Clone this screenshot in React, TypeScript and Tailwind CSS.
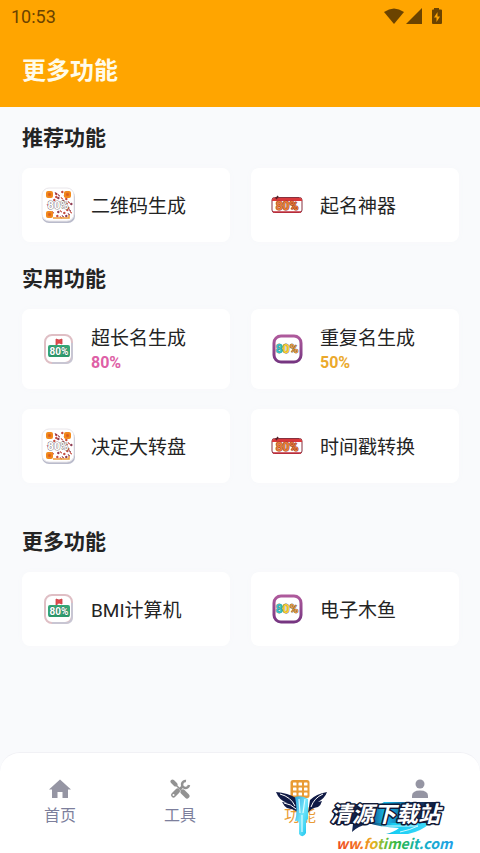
import type { ReactNode } from "react";

type IconName = "qr" | "ticket" | "flag" | "badge";

interface Feature {
  label: string;
  icon: IconName;
  percent?: string;
  percentClass?: string;
}

interface Section {
  title: string;
  className: string;
  items: Feature[];
}

const sections: Section[] = [
  {
    title: "推荐功能",
    className: "mt-[17px]",
    items: [
      { label: "二维码生成", icon: "qr" },
      { label: "起名神器", icon: "ticket" },
    ],
  },
  {
    title: "实用功能",
    className: "mt-[23px]",
    items: [
      { label: "超长名生成", icon: "flag", percent: "80%", percentClass: "text-[#de5fa6]" },
      { label: "重复名生成", icon: "badge", percent: "50%", percentClass: "text-[#eba92c]" },
      { label: "决定大转盘", icon: "qr" },
      { label: "时间戳转换", icon: "ticket" },
    ],
  },
  {
    title: "更多功能",
    className: "mt-[45px]",
    items: [
      { label: "BMI计算机", icon: "flag" },
      { label: "电子木鱼", icon: "badge" },
    ],
  },
];

const iconText = { fontFamily: "Roboto, sans-serif", fontWeight: 700 };

function QrIcon() {
  const specks = [
    [18, 7], [21, 5], [24, 8], [17, 11], [21, 10], [25, 12], [9, 14], [13, 13],
    [28, 14], [30, 17], [7, 17], [8, 21], [29, 22], [26, 23], [12, 24], [17, 25],
    [20, 23], [23, 26], [28, 26], [16, 29], [20, 29], [25, 29], [30, 24], [15, 7],
    [15, 5], [15, 10], [11, 15], [22, 14], [26, 15], [8, 15], [22, 28], [27, 21],
  ];
  return (
    <svg viewBox="0 0 36 36" className="size-9" aria-hidden="true">
      <rect x="2" y="3" width="33" height="33" rx="7" fill="#b9bbcb" />
      <rect x="2" y="1" width="32" height="33" rx="7" fill="#fff" stroke="#e9e6ea" />
      {specks.map(([x, y], i) => (
        <path
          key={i}
          d={i % 2 ? `M${x} ${y}l2 -1l0 2z` : `M${x} ${y}l1 2l1 0`}
          fill={i % 3 ? "#b5322c" : "#7d2940"}
          stroke={i % 3 ? "#c54434" : "#8b3049"}
          strokeWidth="0.7"
        />
      ))}
      {[[6, 4], [24, 4], [6, 24]].map(([x, y]) => (
        <g key={`${x}-${y}`}>
          <rect x={x} y={y} width="7" height="7" rx="2" fill="#f28a1b" />
          <rect x={x + 2} y={y + 2} width="3" height="3" rx="1" fill="#dc5b21" stroke="#e27824" strokeWidth="0.6" />
        </g>
      ))}
      <path d="M13 31h16v-3" fill="none" stroke="#ef9b37" strokeWidth="1.5" />
      <text
        x="18"
        y="22"
        textAnchor="middle"
        fontSize="11"
        fill="#fff"
        stroke="#8b8587"
        strokeWidth="1"
        paintOrder="stroke"
        style={iconText}
      >
        80%
      </text>
    </svg>
  );
}

function TicketIcon() {
  return (
    <svg viewBox="0 0 36 36" className="size-9" aria-hidden="true">
      <rect x="3" y="10.5" width="30" height="15" rx="2.5" fill="#fff" stroke="#87303e" />
      <path d="M3 14v-1q0-2 2-2h26q2 0 2 2v1z" fill="#d9383b" />
      <path d="M4 25h28" stroke="#c42d3b" strokeWidth="1.5" />
      <path d="M7 12l2-3" stroke="#542128" strokeWidth="1.5" />
      <text
        x="18"
        y="23"
        textAnchor="middle"
        fontSize="12"
        fill="#ea8038"
        stroke="#9d4229"
        strokeWidth="1.2"
        paintOrder="stroke"
        style={iconText}
      >
        80%
      </text>
    </svg>
  );
}

function FlagIcon() {
  return (
    <svg viewBox="0 0 36 36" className="size-9" aria-hidden="true">
      <rect x="5" y="4" width="27" height="28" rx="7" fill="#fff" stroke="#dfbfc5" strokeWidth="2" />
      <path d="M12 32h14q6 0 6-6V12" fill="none" stroke="#c8c6d3" strokeWidth="2" />
      <path d="M16 14V8l3 1 3-1v5l-3-1-2 1v2z" fill="#e04b4d" stroke="#ca3f46" strokeWidth="0.8" />
      <rect x="8" y="14" width="22" height="12" rx="2" fill="#36a876" />
      <path d="M9 25h20" stroke="#258a62" />
      <text
        x="19"
        y="24"
        textAnchor="middle"
        fontSize="10"
        fill="#fff"
        stroke="#2b7254"
        strokeWidth="0.8"
        paintOrder="stroke"
        style={iconText}
      >
        80%
      </text>
    </svg>
  );
}

function BadgeIcon() {
  return (
    <svg viewBox="0 0 36 36" className="size-9" aria-hidden="true">
      <defs>
        <linearGradient id="badge-edge" x1="0" y1="0" x2="0" y2="1">
          <stop offset="0" stopColor="#ae5a9c" />
          <stop offset="1" stopColor="#763581" />
        </linearGradient>
      </defs>
      <rect x="5" y="5" width="27" height="26" rx="7" fill="#fff" stroke="url(#badge-edge)" strokeWidth="3" />
      <text
        x="18"
        y="22"
        textAnchor="middle"
        fontSize="12"
        stroke="#5b5944"
        strokeWidth="0.8"
        paintOrder="stroke"
        style={iconText}
      >
        <tspan fill="#2ec5cd">8</tspan>
        <tspan fill="#ffd02e">0</tspan>
        <tspan fill="#f09a35">%</tspan>
      </text>
    </svg>
  );
}

const icons: Record<IconName, ReactNode> = {
  qr: <QrIcon />,
  ticket: <TicketIcon />,
  flag: <FlagIcon />,
  badge: <BadgeIcon />,
};

function StatusBar() {
  return (
    <div className="flex h-[34px] items-center justify-between pr-9 pl-[11px] text-[#6b4300]">
      <span className="font-[Roboto,sans-serif] text-lg">10:53</span>
      <svg viewBox="0 0 60 18" className="h-[18px] w-[60px]" fill="currentColor" aria-hidden="true">
        <path d="M0 4Q10-3 20 4L10 16z" />
        <path d="M38 0v16H22z" />
        <path
          fillRule="evenodd"
          d="M50 0h5v1.5h2q1 0 1 1V15q0 1-1 1h-8q-1 0-1-1V2.500q0-1 1-1h1zM53.500 4L50 9.500h2.500V14L56 8.500h-2.500z"
        />
      </svg>
    </div>
  );
}

function FeatureCard({ item }: { item: Feature }) {
  return (
    <button className="flex items-center gap-[15px] rounded-lg bg-white pl-[18px] text-left shadow-[0_0_6px_#f7f8fa]">
      {icons[item.icon]}
      <span className="flex flex-col pt-[3px]">
        <span className="text-[19px] leading-6 text-[#242424]">{item.label}</span>
        {item.percent && (
          <span className={`font-[Roboto,sans-serif] text-base leading-6 font-bold ${item.percentClass}`}>
            {item.percent}
          </span>
        )}
      </span>
    </button>
  );
}

function HomeIcon() {
  return (
    <svg viewBox="0 0 22 20" className="h-5 w-[22px]" fill="#9595a3" aria-hidden="true">
      <path d="M11 0.5L22 10.500H19V19H13.500V13H8.500V19H3V10.500H0z" />
    </svg>
  );
}

function ToolsIcon() {
  return (
    <svg viewBox="0 0 22 20" className="h-5 w-[22px]" aria-hidden="true">
      <path d="M3.500 2.500l3 3" stroke="#929292" strokeWidth="4" strokeLinecap="round" />
      <path d="M7 6l6 6" stroke="#929292" strokeWidth="1.5" />
      <path d="M14 13l4 4" stroke="#929292" strokeWidth="5" strokeLinecap="round" />
      <path d="M8.500 12L4.500 16" stroke="#929292" strokeWidth="5" strokeLinecap="round" />
      <circle cx="4.500" cy="16" r="1" fill="#fff" />
      <path d="M17 2a3.500 3.500 0 1 0 3 4" fill="none" stroke="#929292" strokeWidth="2.500" />
      <path d="M11 10l3-3" stroke="#929292" strokeWidth="2.500" />
    </svg>
  );
}

function GridIcon() {
  return (
    <svg viewBox="0 0 22 20" className="h-5 w-[22px]" aria-hidden="true">
      <rect x="1.500" y="1" width="19" height="18" rx="2.500" fill="#e99b35" />
      {[3.5, 8.5, 13.5].map((y) =>
        [4, 9.5, 15].map((x) => <rect key={`${x}-${y}`} x={x} y={y} width="3.500" height="3" rx="0.500" fill="#fff" />),
      )}
    </svg>
  );
}

function PersonIcon() {
  return (
    <svg viewBox="0 0 22 20" className="h-5 w-[22px]" fill="#9595a3" aria-hidden="true">
      <circle cx="11" cy="5" r="4.500" />
      <path d="M3 19v-2q0-5.500 8-5.500t8 5.500v2z" />
    </svg>
  );
}

const tabs = [
  { name: "首页", label: "首页", icon: <HomeIcon />, color: "text-[#7d7f9c]" },
  { name: "工具", label: "工具", icon: <ToolsIcon />, color: "text-[#7d7f9c]" },
  { name: "功能", label: "功能", icon: <GridIcon />, color: "text-[#e99b35]" },
  { name: "我的", label: null, icon: <PersonIcon />, color: "text-[#7d7f9c]" },
];

function SiteLogo() {
  return (
    <svg
      viewBox="0 0 190 80"
      className="pointer-events-none absolute right-[14px] bottom-0 h-20 w-[190px]"
      aria-hidden="true"
    >
      <defs>
        <linearGradient id="water" x1="0" y1="0" x2="1" y2="1">
          <stop offset="0" stopColor="#2fa5dd" />
          <stop offset="0.5" stopColor="#72e5fa" />
          <stop offset="1" stopColor="#12c2ed" />
        </linearGradient>
        <linearGradient id="plate" x1="0" y1="0" x2="1" y2="0">
          <stop offset="0" stopColor="#101a3c" />
          <stop offset="0.3" stopColor="#102958" />
          <stop offset="0.5" stopColor="#19bdf0" />
          <stop offset="0.75" stopColor="#123f75" />
          <stop offset="1" stopColor="#111936" />
        </linearGradient>
        <linearGradient id="swoosh" x1="0" y1="0" x2="1" y2="0">
          <stop offset="0" stopColor="#12305f" />
          <stop offset="0.4" stopColor="#16cdf4" />
          <stop offset="1" stopColor="#3fd8fa" />
        </linearGradient>
        <linearGradient id="rainbow" x1="0" y1="0" x2="1" y2="0">
          <stop offset="0" stopColor="#ee4823" />
          <stop offset="0.22" stopColor="#f27622" />
          <stop offset="0.32" stopColor="#e7b523" />
          <stop offset="0.42" stopColor="#68bd38" />
          <stop offset="0.55" stopColor="#29b64d" />
          <stop offset="0.72" stopColor="#17afc2" />
          <stop offset="1" stopColor="#239fe9" />
        </linearGradient>
      </defs>
      {/* Wings */}
      <path d="M0 19q12 1 20 6l2 14q-5-3-11-4-3-2-5-6l5 1Q3 27 0 19z" fill="#111b46" />
      <path d="M51 19q-11 2-17 8l-2 13q3-5 10-6 3-2 4-6l-4 1q7-4 9-10z" fill="#111b46" />
      <path d="M4 21q11 3 15 12M47 21q-9 4-12 13M8 30q7 1 12 6" fill="none" stroke="#fff" />
      {/* Waterfall */}
      <path d="M19 24q7-2 13 2v20q-2 1-2 5v9q-3 6-7 1V50q-1-3-4-2 3-10 0-24z" fill="url(#water)" />
      <path d="M23 26l1 14M29 26l-2 14M26 42v17" fill="none" stroke="#dcfbff" strokeWidth="1.2" />
      {/* Name plate */}
      <path d="M60 31h45l3-2h55l-5 22H92q-10 2-16 8l1-8H56z" fill="url(#plate)" />
      <path d="M92 50h62q-8 8-22 11h-22q8-2 13-6-20-1-31-5z" fill="url(#swoosh)" />
      <path d="M106 53h36q-8 4-18 6" fill="none" stroke="#d1faff" />
      <text
        x="54"
        y="49"
        fontSize="22"
        fontStyle="italic"
        fontWeight="700"
        fill="#fff"
        stroke="#111936"
        strokeWidth="3"
        strokeLinejoin="round"
        paintOrder="stroke"
        style={{ fontFamily: '"Noto Sans CJK SC", sans-serif' }}
      >
        清源下载站
      </text>
      <text
        x="60"
        y="76"
        fontSize="14"
        fontStyle="italic"
        fontWeight="700"
        fill="url(#rainbow)"
        style={{ fontFamily: '"Noto Sans CJK SC", sans-serif' }}
      >
        ww.fotimeit.com
      </text>
    </svg>
  );
}

export default function App() {
  return (
    <div className="flex min-h-screen flex-col bg-[#f9fafc] font-[Roboto,'Noto_Sans_CJK_SC',sans-serif]">
      <header className="bg-[#ffa500] pb-[18px]">
        <StatusBar />
        <h1 className="mt-5 px-[22px] text-2xl leading-[35px] font-bold text-[#fffbe9]">更多功能</h1>
      </header>

      <main className="flex-1 pr-[21px] pl-[22px]">
        {sections.map((section) => (
          <section key={section.title} className={section.className}>
            <h2 className="text-[21px] leading-7 font-bold text-[#242424]">{section.title}</h2>
            <div className="mt-4 grid grid-cols-2 gap-x-[21px] gap-y-5">
              {section.items.map((item) => (
                <div key={item.label} className={item.percent ? "grid h-20" : "grid h-[74px]"}>
                  <FeatureCard item={item} />
                </div>
              ))}
            </div>
          </section>
        ))}
      </main>

      <nav className="relative grid h-[101px] grid-cols-4 rounded-t-[20px] border-t border-[#f1f1f5] bg-white">
        {tabs.map((tab) => (
          <button
            key={tab.name}
            aria-label={tab.name}
            className={`flex flex-col items-center gap-[5px] pt-[26px] text-base leading-6 ${tab.color}`}
          >
            {tab.icon}
            {tab.label}
          </button>
        ))}
        <SiteLogo />
      </nav>
    </div>
  );
}
